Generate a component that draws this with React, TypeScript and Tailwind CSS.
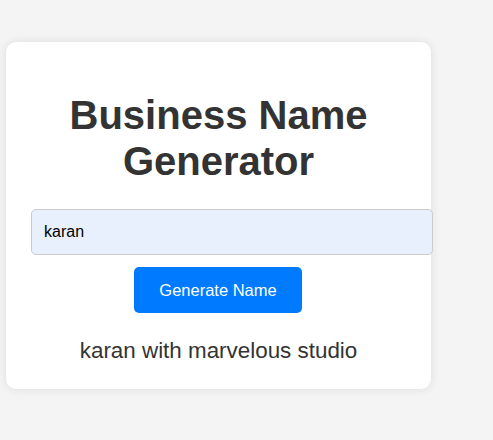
import { useState } from "react";

const App = () => {
  const [name, setName] = useState("karan");
  const [result, setResult] = useState("karan with marvelous studio");

  const generate = () => {
    if (!name.trim()) return;
    setResult(`${name.trim()} with marvelous studio`);
  };

  return (
    <div className="min-h-[440px] bg-[#f4f4f4] pt-[42px] font-['Liberation_Sans',Arial,sans-serif]">
      {/* Card */}
      <div className="ml-[6px] w-[425px] rounded-[10px] bg-white px-[25px] pt-[25px] pb-[25px] text-center shadow-[0_0_10px_rgba(0,0,0,0.1)]">
        <h1 className="mt-[25px] mb-[25px] text-[40px] leading-[46px] font-bold text-[#333]">
          Business Name Generator
        </h1>

        <input
          type="text"
          value={name}
          onChange={(e) => setName(e.target.value)}
          className="box-border block h-[46px] w-[402px] rounded-[5px] border border-[#ccc] bg-[#e8f0fe] px-[12px] text-left text-[16px] text-black outline-none"
        />

        <button
          onClick={generate}
          className="mt-[12px] ml-[103px] block h-[46px] w-[168px] rounded-[5px] bg-[#007bff] text-[16.5px] text-white"
        >
          Generate Name
        </button>

        <p className="mt-[25px] text-[22.4px] leading-[26px] text-[#333]">{result}</p>
      </div>
    </div>
  );
};

export default App;
